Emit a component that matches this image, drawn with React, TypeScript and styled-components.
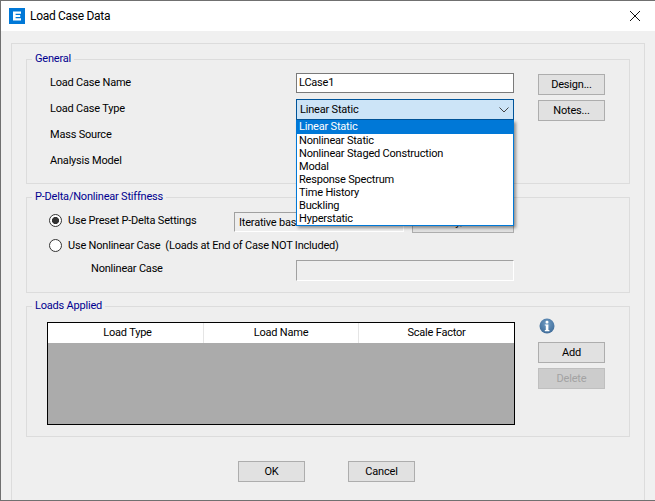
import React from "react";
import styled, { createGlobalStyle } from "styled-components";

const GlobalStyle = createGlobalStyle`
  html, body {
    margin: 0;
    padding: 0;
    background: #f0f0f0;
  }

  * {
    box-sizing: border-box;
  }
`;

const caseTypes = [
  "Linear Static",
  "Nonlinear Static",
  "Nonlinear Staged Construction",
  "Modal",
  "Response Spectrum",
  "Time History",
  "Buckling",
  "Hyperstatic",
];

export default function App() {
  return (
    <>
      <GlobalStyle />
      <Dialog>
        <TitleBar>
          <svg width="16" height="16" viewBox="0 0 16 16">
            <rect width="16" height="16" fill="#0078d7" />
            <path d="M4 3.5h8v2.2H6.6v1.3h4.6v2H6.6v1.3H12v2.2H4z" fill="#fff" />
          </svg>
          <Title>Load Case Data</Title>
          <CloseIcon width="10" height="10" viewBox="0 0 10 10">
            <path d="M0 0l10 10M10 0L0 10" stroke="#111" strokeWidth="1" fill="none" />
          </CloseIcon>
        </TitleBar>
        <Frame>
          <Group>
            <Legend>General</Legend>
            <Row>
              <Label>Load Case Name</Label>
              <TextInput>LCase1</TextInput>
              <SideButton>Design...</SideButton>
            </Row>
            <Row>
              <Label>Load Case Type</Label>
              <ComboWrap>
                <Combo>
                  Linear Static
                  <svg width="10" height="6" viewBox="0 0 10 6">
                    <path d="M.5.5L5 5 9.5.5" stroke="#444" fill="none" />
                  </svg>
                </Combo>
                <DropList>
                  {caseTypes.map((type, i) => (
                    <DropItem key={type} $selected={i === 0}>{type}</DropItem>
                  ))}
                </DropList>
              </ComboWrap>
              <SideButton>Notes...</SideButton>
            </Row>
            <Row>
              <Label>Mass Source</Label>
            </Row>
            <Row>
              <Label>Analysis Model</Label>
            </Row>
          </Group>

          <StiffnessGroup>
            <Legend>P-Delta/Nonlinear Stiffness</Legend>
            <PresetRow>
              <RadioLabel>
                <Radio $checked />
                Use Preset P-Delta Settings
              </RadioLabel>
              <PresetBox>Iterative based on Loads</PresetBox>
              <ModifyButton>Modify/Show...</ModifyButton>
            </PresetRow>
            <CaseRow>
              <RadioLabel>
                <Radio />
                Use Nonlinear Case&nbsp; (Loads at End of Case NOT Included)
              </RadioLabel>
            </CaseRow>
            <DisabledRow>
              <IndentLabel>Nonlinear Case</IndentLabel>
              <DisabledInput />
            </DisabledRow>
          </StiffnessGroup>

          <LoadsGroup>
            <Legend>Loads Applied</Legend>
            <LoadsBody>
              <Table>
                <TableHead>
                  <HeadCell>Load Type</HeadCell>
                  <HeadCell>Load Name</HeadCell>
                  <HeadCell>Scale Factor</HeadCell>
                </TableHead>
              </Table>
              <SideColumn>
                <svg width="16" height="16" viewBox="0 0 16 16">
                  <defs>
                    <radialGradient id="info" cx="50%" cy="35%" r="65%">
                      <stop offset="0%" stopColor="#6f9cc4" />
                      <stop offset="100%" stopColor="#3f6c99" />
                    </radialGradient>
                  </defs>
                  <circle cx="8" cy="8" r="7.5" fill="url(#info)" />
                  <rect x="6.6" y="2.8" width="2.8" height="2.6" rx="1" fill="#fff" />
                  <path d="M5.8 6.4h3.6v5.6h1v1.2H5.8V12h1V7.6h-1z" fill="#fff" />
                </svg>
                <AddButton>Add</AddButton>
                <DeleteButton>Delete</DeleteButton>
              </SideColumn>
            </LoadsBody>
          </LoadsGroup>

          <Footer>
            <Button>OK</Button>
            <Button>Cancel</Button>
          </Footer>
        </Frame>
      </Dialog>
    </>
  );
}

const Dialog = styled.div`
  width: 655px;
  height: 501px;
  display: flex;
  flex-direction: column;
  background: #f0f0f0;
  border-top: 1px solid #707070;
  border-left: 1px solid #707070;
  border-bottom: 1px solid #707070;
  font-family: Roboto, sans-serif;
  font-size: 11px;
  letter-spacing: -0.2px;
  color: #000;
  overflow: hidden;
`;

const TitleBar = styled.div`
  height: 30px;
  flex: none;
  display: flex;
  align-items: center;
  gap: 5px;
  padding: 0 10px 0 8px;
  background: #fff;
`;

const Title = styled.div`
  flex: 1;
  font-size: 12px;
  letter-spacing: -0.3px;
`;

const CloseIcon = styled.svg`
  margin-right: 5px;
`;

const Frame = styled.div`
  flex: 1;
  margin: 12px 10px 0 10px;
  padding: 8px 14px 0;
  border: 1px solid #dcdcdc;
  border-bottom: none;
  background: #efefef;
`;

const Group = styled.fieldset`
  margin: 0;
  padding: 7px 0 6px 22px;
  min-width: 0;
  border: 1px solid #dcdcdc;
  background: #eeeeee;
`;

const StiffnessGroup = styled(Group)`
  margin-top: 6px;
  padding: 8px 0 11px 22px;
`;

const LoadsGroup = styled(Group)`
  margin-top: 6px;
  padding: 5px 0 11px 22px;
`;

const Legend = styled.legend`
  margin-left: -17px;
  padding: 0 3px;
  line-height: 14px;
  color: #00008f;
`;

const Row = styled.div`
  height: 26px;
  display: flex;
  align-items: flex-start;
`;

const Label = styled.div`
  width: 247px;
  flex: none;
  padding-left: 1px;
  line-height: 20px;
`;

const TextInput = styled.div`
  width: 218px;
  height: 20px;
  flex: none;
  padding-left: 2px;
  line-height: 18px;
  background: #fff;
  border: 1px solid #7a7a7a;
`;

const ComboWrap = styled.div`
  position: relative;
  width: 218px;
  flex: none;
`;

const Combo = styled.div`
  height: 21px;
  display: flex;
  align-items: center;
  justify-content: space-between;
  padding: 0 4px 0 3px;
  background: #cce4f7;
  border: 1px solid #005499;
`;

const DropList = styled.div`
  position: absolute;
  top: 100%;
  left: 0;
  z-index: 2;
  width: 218px;
  height: 106px;
  background: #fff;
  border: 1px solid #0078d7;
  border-top: none;
  box-shadow: 2px 2px 3px rgba(0, 0, 0, 0.4);
`;

const DropItem = styled.div<{ $selected?: boolean }>`
  height: ${p => (p.$selected ? "14px" : "13px")};
  padding-left: 2px;
  line-height: 14px;
  white-space: nowrap;
  color: ${p => (p.$selected ? "#fff" : "#000")};
  background: ${p => (p.$selected ? "#0078d7" : "transparent")};
`;

const Button = styled.div`
  width: 67px;
  height: 21px;
  flex: none;
  display: flex;
  align-items: center;
  justify-content: center;
  background: #e1e1e1;
  border: 1px solid #adadad;
`;

const SideButton = styled(Button)`
  margin: 1px 0 0 24px;
`;

const PresetRow = styled.div`
  height: 25px;
  display: flex;
  align-items: flex-start;
`;

const CaseRow = styled.div`
  height: 23px;
  display: flex;
`;

const RadioLabel = styled.div`
  display: flex;
  align-items: center;
  gap: 6px;
  width: 185px;
  height: 17px;
  flex: none;
  white-space: nowrap;
`;

const Radio = styled.span<{ $checked?: boolean }>`
  width: 13px;
  height: 13px;
  flex: none;
  border-radius: 50%;
  border: 1px solid #333;
  background: ${p => (p.$checked ? "radial-gradient(circle, #333 0 3.2px, #fff 3.9px)" : "#fff")};
`;

const PresetBox = styled.div`
  width: 170px;
  height: 20px;
  flex: none;
  padding-left: 4px;
  line-height: 20px;
  white-space: nowrap;
  border: 1px solid #fff;
  border-top-color: #a0a0a0;
  border-left-color: #a0a0a0;
`;

const ModifyButton = styled(Button)`
  width: 102px;
  margin-left: 8px;
`;

const DisabledRow = styled.div`
  display: flex;
`;

const IndentLabel = styled(Label)`
  padding-left: 42px;
  line-height: 18px;
`;

const DisabledInput = styled.div`
  width: 218px;
  height: 21px;
  border: 1px solid #fff;
  border-top-color: #a0a0a0;
  border-left-color: #a0a0a0;
`;

const LoadsBody = styled.div`
  display: flex;
  align-items: flex-start;
  gap: 23px;
`;

const Table = styled.div`
  width: 468px;
  height: 103px;
  margin: 4px 0 0 -2px;
  background: #ababab;
  border: 1px solid #000;
`;

const TableHead = styled.div`
  height: 20px;
  display: grid;
  grid-template-columns: 156px 155px 1fr;
  background: #fff;
`;

const HeadCell = styled.div`
  text-align: center;
  line-height: 20px;
  border-right: 1px solid #e5e5e5;

  &:first-child {
    padding-left: 4px;
  }

  &:last-child {
    border-right: none;
  }
`;

const SideColumn = styled.div`
  display: flex;
  flex-direction: column;
  align-items: flex-start;

  svg {
    margin-left: 1px;
  }
`;

const AddButton = styled(Button)`
  margin-top: 8px;
`;

const DeleteButton = styled(Button)`
  margin-top: 5px;
  color: #a3a3a3;
  background: #cccccc;
  border-color: #bfbfbf;
`;

const Footer = styled.div`
  display: flex;
  gap: 43px;
  margin-top: 24px;
  padding-left: 212px;
`;
